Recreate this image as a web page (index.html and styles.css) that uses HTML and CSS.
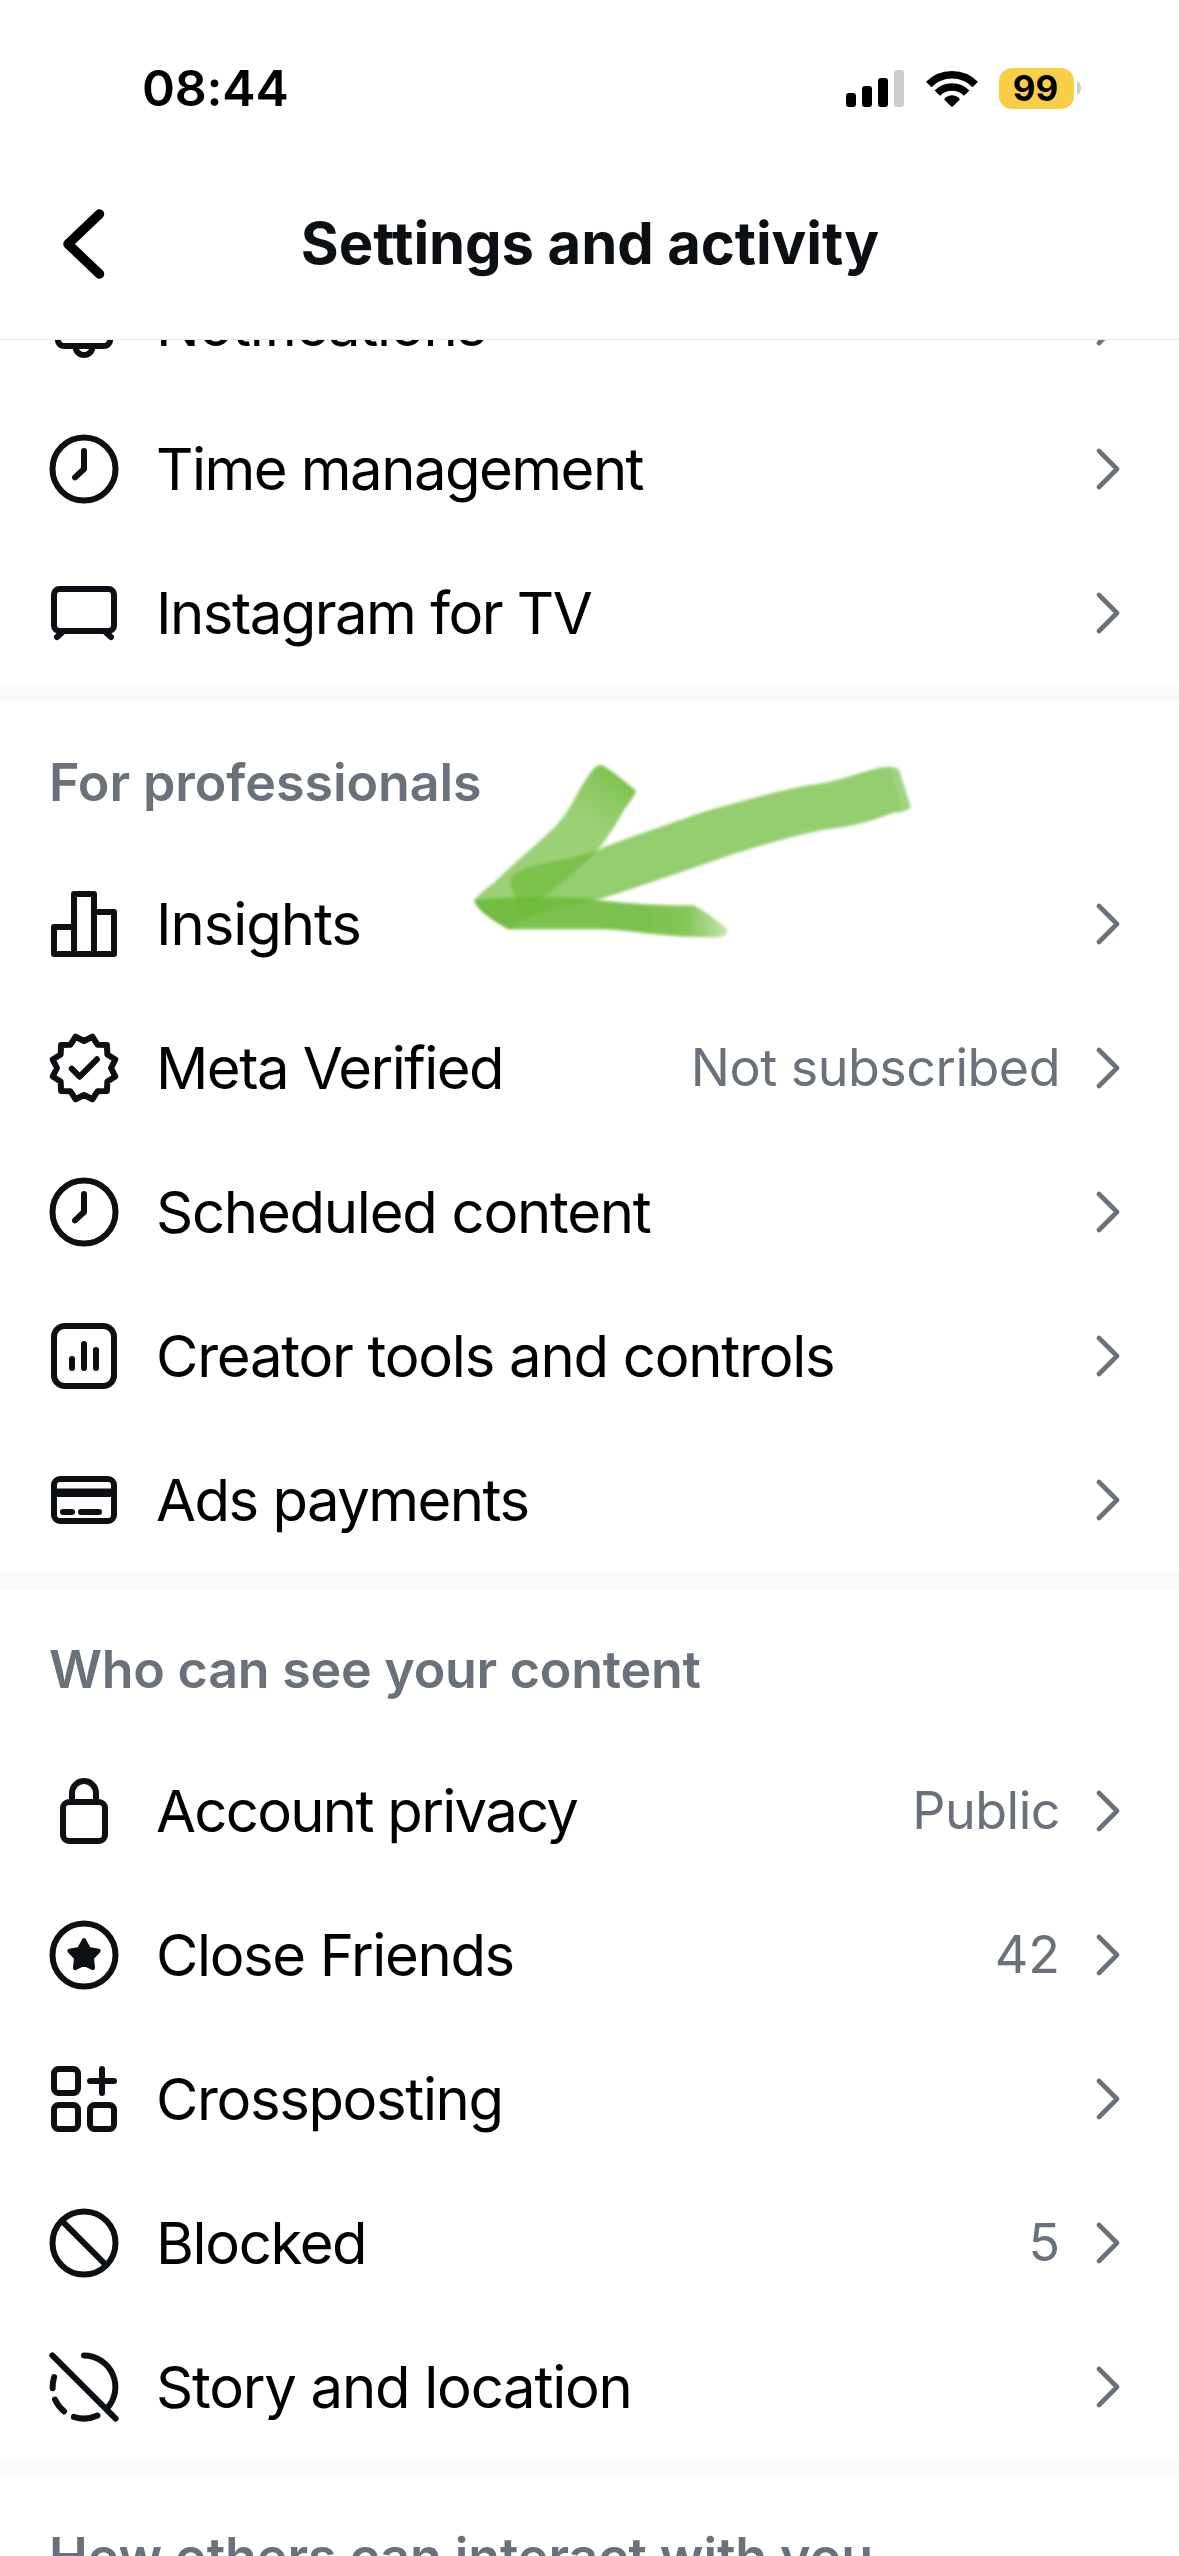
FILE: index.html
```html
<!DOCTYPE html>
<html lang="en">
<head>
<meta charset="utf-8">
<title>Settings and activity</title>
<link rel="stylesheet" href="styles.css">
</head>
<body>
<svg class="defs" aria-hidden="true">
  <symbol id="chevron" viewBox="0 0 24 42"><path d="M3 3l18 18L3 39"/></symbol>
  <symbol id="clock" viewBox="0 0 24 24"><circle cx="12" cy="12" r="10.5"/><path d="M12 6v6l-3 2.8"/></symbol>
</svg>
<div class="screen">
  <header class="top">
    <div class="status">
      <span class="time">08:44</span>
      <div class="indicators">
        <svg class="signal" viewBox="0 0 58 37"><rect y="23" width="10" height="14" rx="3"/><rect x="16" y="16" width="10" height="21" rx="3"/><rect x="32" y="8" width="10" height="29" rx="3"/><rect class="off" x="48" width="10" height="37" rx="3"/></svg>
        <svg class="wifi" viewBox="0 0 52 37"><path class="arc" d="M2.7 14.5A32.6 32.6 0 0 1 49.3 14.5"/><path class="arc" d="M11.3 23.1A20.6 20.6 0 0 1 40.7 23.1"/><path d="M18.4 28.9C22.4 24.1 29.6 24.1 33.6 28.9Q33.9 29.5 33.4 30L26 37.3L18.6 30Q18.1 29.5 18.4 28.9z"/></svg>
        <div class="battery"><span class="level">99</span><svg class="nub" viewBox="0 0 4 14"><path d="M0 0Q4 2.5 4 7T0 14z"/></svg></div>
      </div>
    </div>
    <div class="titlebar">
      <svg class="back" viewBox="0 0 42 70"><path d="M36.5 5L5 35l31.5 30"/></svg>
      <h1 class="title">Settings and activity</h1>
    </div>
  </header>

  <main class="list">
    <section class="group">
      <div class="row"><svg class="icon" viewBox="0 0 24 24"><path d="M5 9a7 7 0 0 1 14 0v3l1.5 4.2a2 2 0 0 1-1.9 2.8H5.4a2 2 0 0 1-1.9-2.8L5 12zM9.2 19.3a2.8 2.7 0 0 0 5.6 0"/></svg><span class="label snug">Notifications</span><svg class="chevron"><use href="#chevron"/></svg></div>
      <div class="row"><svg class="icon"><use href="#clock"/></svg><span class="label tight">Time management</span><svg class="chevron"><use href="#chevron"/></svg></div>
      <div class="row"><svg class="icon" viewBox="0 0 24 24"><rect x="2" y="4" width="20" height="14" rx="1.8"/><path d="M4.6 18.6L3 20M19.4 18.6L21 20"/></svg><span class="label tight">Instagram for TV</span><svg class="chevron"><use href="#chevron"/></svg></div>
    </section>

    <section class="group">
      <h2 class="heading">For professionals</h2>
      <div class="row"><svg class="icon" viewBox="0 0 24 24"><path d="M8.67 22V13H2v9h20V8h-6.67M8.67 13V2h6.66v20"/></svg><span class="label loose">Insights</span><svg class="chevron"><use href="#chevron"/></svg></div>
      <div class="row"><svg class="icon" viewBox="0 0 24 24"><path d="M12 3L14.8 1.57 16.5 4.21 19.64 4.36 19.79 7.5 22.43 9.2 21 12 22.43 14.8 19.79 16.5 19.64 19.64 16.5 19.79 14.8 22.43 12 21 9.2 22.43 7.5 19.79 4.36 19.64 4.21 16.5 1.57 14.8 3 12 1.57 9.2 4.21 7.5 4.36 4.36 7.5 4.21 9.2 1.57z"/><path d="M7.9 12.2l2.65 2.7 5.75-5.8"/></svg><span class="label tight">Meta Verified</span><span class="value">Not subscribed</span><svg class="chevron"><use href="#chevron"/></svg></div>
      <div class="row"><svg class="icon"><use href="#clock"/></svg><span class="label snug">Scheduled content</span><svg class="chevron"><use href="#chevron"/></svg></div>
      <div class="row"><svg class="icon" viewBox="0 0 24 24"><rect x="2" y="2" width="20" height="20" rx="3.6"/><path d="M8 13v3M12 8v8M16 10v6"/></svg><span class="label snug">Creator tools and controls</span><svg class="chevron"><use href="#chevron"/></svg></div>
      <div class="row"><svg class="icon" viewBox="0 0 24 24"><rect x="2" y="5" width="20" height="14" rx="2"/><path class="stripe" d="M2 9.6h20"/><path d="M5 16h3M11 16h6"/></svg><span class="label tight">Ads payments</span><svg class="chevron"><use href="#chevron"/></svg></div>
    </section>

    <section class="group">
      <h2 class="heading narrow">Who can see your content</h2>
      <div class="row"><svg class="icon" viewBox="0 0 24 24"><rect x="5" y="9" width="14" height="13" rx="2"/><path d="M8 9V6a4 4 0 0 1 8 0v3"/></svg><span class="label tightest">Account privacy</span><span class="value">Public</span><svg class="chevron"><use href="#chevron"/></svg></div>
      <div class="row"><svg class="icon" viewBox="0 0 24 24"><circle cx="12" cy="12" r="10.5"/><path class="star" d="M12 7.1L13.62 9.98 16.85 10.62 14.62 13.05 15 16.33 12 14.95 9 16.33 9.38 13.05 7.15 10.62 10.38 9.98z"/></svg><span class="label">Close Friends</span><span class="value digits">42</span><svg class="chevron"><use href="#chevron"/></svg></div>
      <div class="row"><svg class="icon" viewBox="0 0 24 24"><rect x="2" y="2" width="8" height="8" rx="1.5"/><rect x="2" y="14" width="8" height="8" rx="1.5"/><rect x="14" y="14" width="8" height="8" rx="1.5"/><path d="M18 2v8M14 6h8"/></svg><span class="label">Crossposting</span><svg class="chevron"><use href="#chevron"/></svg></div>
      <div class="row"><svg class="icon" viewBox="0 0 24 24"><circle cx="12" cy="12" r="10.5"/><path d="M4.8 4.8l14.4 14.4"/></svg><span class="label">Blocked</span><span class="value digits">5</span><svg class="chevron"><use href="#chevron"/></svg></div>
      <div class="row"><svg class="icon" viewBox="0 0 24 24"><path d="M1.45 1.45l21.1 21.1M12 1.5A10.5 10.5 0 0 1 19.6 19.2M8.6 21.95A10.5 10.5 0 0 0 16.5 21.5M2.35 16.2A10.5 10.5 0 0 0 5.35 20.1M2.05 8.7A10.5 10.5 0 0 0 1.55 12.4"/></svg><span class="label snug">Story and location</span><svg class="chevron"><use href="#chevron"/></svg></div>
    </section>

    <section class="group">
      <h2 class="heading">How others can interact with you</h2>
    </section>
  </main>

  <svg class="marker" viewBox="0 0 1500 660" aria-hidden="true">
    <defs>
      <filter id="soft" x="-5%" y="-5%" width="110%" height="110%"><feGaussianBlur stdDeviation="4"/></filter>
      <linearGradient id="barb" gradientUnits="userSpaceOnUse" x1="540" y1="100" x2="440" y2="240"><stop offset="0" stop-opacity=".92"/><stop offset=".35" stop-opacity=".82"/><stop offset="1" stop-opacity=".7"/></linearGradient>
      <linearGradient id="base" gradientUnits="userSpaceOnUse" x1="640" y1="0" x2="865" y2="0"><stop offset="0" stop-opacity=".9"/><stop offset=".45" stop-opacity=".84"/><stop offset="1" stop-opacity=".4"/></linearGradient>
    </defs>
    <g filter="url(#soft)">
      <path class="shaft" d="M1325 82Q1370 76 1378 92L1412 200Q1405 216 1365 217C1330 228 1290 248 1215 260C1100 272 980 312 880 342C740 390 600 440 480 477C400 500 330 505 260 535Q232 530 232 480C215 450 200 415 225 402C260 370 390 362 470 330C570 290 680 255 800 212C900 185 1020 150 1110 135C1190 128 1260 96 1325 82z"/>
      <path class="cap" d="M1350 80Q1372 76 1378 92L1412 200Q1407 214 1386 216C1378 170 1366 130 1350 80z"/>
    </g>
    <g filter="url(#soft)"><path class="barb" d="M482 75Q500 78 588 152Q586 165 555 205C530 250 500 300 460 345C400 400 340 450 300 480L300 505L210 565Q120 520 104 485Q105 470 160 430C220 370 290 315 350 255C400 200 410 150 460 88Q470 76 482 75z"/></g>
    <g filter="url(#soft)"><path class="base" d="M104 480C200 470 330 470 440 475C540 490 650 498 760 496Q800 515 862 568Q862 590 840 591C700 595 600 575 500 568L205 568Q112 515 104 480z"/></g>
  </svg>
</div>
</body>
</html>
```
FILE: styles.css
```css
* { box-sizing: border-box; }

body {
  margin: 0;
  background: #fff;
  font-family: Inter, "Liberation Sans", sans-serif;
  color: #000;
}

.defs { position: absolute; width: 0; height: 0; }

.screen {
  position: relative;
  display: flex;
  flex-direction: column;
  width: 1179px;
  height: 2556px;
  overflow: hidden;
}

.top {
  flex: none;
  height: 340px;
  border-bottom: 1px solid #e6e8ea;
}

/* Status bar */
.status {
  display: flex;
  justify-content: space-between;
  align-items: center;
  height: 149px;
  padding: 27px 98px 0 142px;
}

.time {
  font-size: 50px;
  font-weight: 600;
  letter-spacing: -0.2px;
  line-height: 60px;
}

.indicators { display: flex; align-items: center; }

.signal { width: 58px; height: 37px; margin-right: 22px; }
.signal .off { fill: #ccc; }

.wifi { width: 52px; height: 37px; margin-right: 21px; }
.wifi .arc { fill: none; stroke: #000; stroke-width: 7.6; }

.battery { display: flex; align-items: center; gap: 3px; }

.level {
  width: 75px;
  height: 41px;
  padding-right: 2px;
  border-radius: 13px;
  background: #f8ce46;
  font-size: 35px;
  font-weight: 650;
  line-height: 41px;
  text-align: center;
}

.nub { width: 4px; height: 14px; fill: #ccc; }

/* Title bar */
.titlebar {
  display: grid;
  grid-template-columns: 105px 1fr 105px;
  align-items: center;
  height: 190px;
}

.back {
  justify-self: end;
  width: 42px;
  height: 70px;
  fill: none;
  stroke: #000;
  stroke-width: 9.5;
  stroke-linecap: round;
  stroke-linejoin: round;
}

.title {
  margin: 0;
  padding: 0 0 2px 1px;
  color: #0c1014;
  font-size: 58px;
  font-weight: 700;
  letter-spacing: -0.1px;
  line-height: 70px;
  text-align: center;
}

/* Scrolled list: the first row sits partly under the header */
.list {
  flex: 1;
  min-height: 0;
  overflow: hidden;
}

.group:first-child { margin-top: -87px; }

.group + .group { border-top: 18px solid #f9f9f9; }

.heading {
  height: 149px;
  margin: 0;
  padding: 11px 49px 0;
  color: #6a717a;
  font-size: 52px;
  font-weight: 600;
  letter-spacing: -0.08px;
  line-height: 138px;
  white-space: nowrap;
}

.heading.narrow { letter-spacing: -0.26px; }

.row {
  display: flex;
  align-items: center;
  height: 144px;
  padding: 0 59px 0 48px;
}

.icon {
  flex: none;
  width: 72px;
  height: 72px;
  margin-right: 36px;
  overflow: visible;
  fill: none;
  stroke: #0c1014;
  stroke-width: 2;
  stroke-linecap: round;
  stroke-linejoin: round;
}

.icon .stripe { stroke-width: 2.8; stroke-linecap: butt; }
.icon .star { fill: #0c1014; stroke-width: 1.4; }

.label {
  flex: 1;
  font-size: 58px;
  letter-spacing: -1.36px;
  line-height: 70px;
  white-space: nowrap;
}

.label.loose { letter-spacing: -1.06px; }
.label.snug { letter-spacing: -1.24px; }
.label.tight { letter-spacing: -1.52px; }
.label.tightest { letter-spacing: -1.7px; }

.value {
  margin-right: 36px;
  color: #6a717a;
  font-size: 52px;
  letter-spacing: -0.5px;
  line-height: 64px;
}

.value.digits { letter-spacing: 0; }

.chevron {
  flex: none;
  width: 24px;
  height: 42px;
  fill: none;
  stroke: #6a717a;
  stroke-width: 4.6;
  stroke-linecap: round;
  stroke-linejoin: round;
}

/* Highlighter arrow drawn over the list */
.marker {
  position: absolute;
  left: 440px;
  top: 740px;
  width: 500px;
  height: 220px;
}

.marker .shaft { fill: #6fbb3a; fill-opacity: 0.74; }
.marker .cap { fill: #fff; fill-opacity: 0.12; }
.marker .barb { fill: url(#barb); }
.marker .base { fill: url(#base); }
.marker stop { stop-color: #6fbb3a; }
```
